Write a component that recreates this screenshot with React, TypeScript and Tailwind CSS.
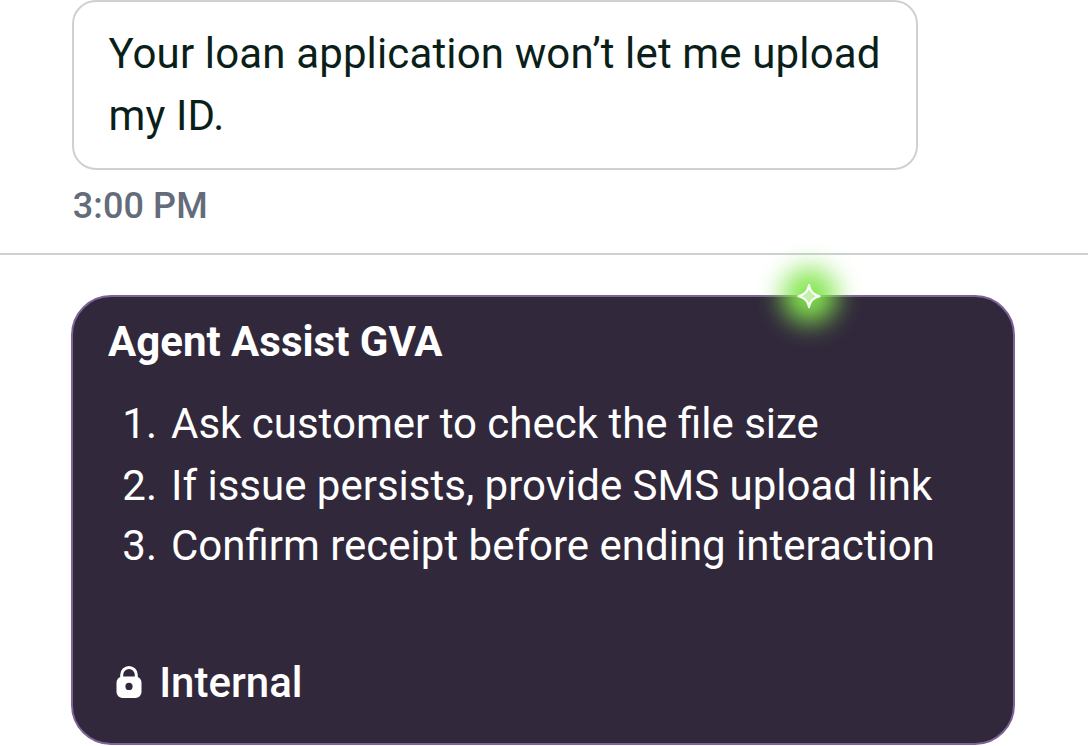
const STEPS = [
  'Ask customer to check the file size',
  'If issue persists, provide SMS upload link',
  'Confirm receipt before ending interaction',
]

export default function App() {
  return (
    <main className="flex h-[746px] w-[1088px] flex-col overflow-hidden bg-white font-['Roboto',sans-serif]">
      <CustomerMessage text="Your loan application won’t let me upload my ID." time="3:00 PM" />
      <AssistCard title="Agent Assist GVA" steps={STEPS} />
    </main>
  )
}

// CustomerMessage is the outlined bubble with its timestamp underneath.
function CustomerMessage({ text, time }: { text: string; time: string }) {
  return (
    <section className="h-[255px] shrink-0 border-b-2 border-[#cdd2d0] pl-[72px]">
      <p className="h-[170px] w-[846px] rounded-[24px] border-2 border-[#cdd2d0] pl-[34.5px] pt-[21px] text-[42px] leading-[62px] tracking-[0.14px] text-[#0b1f1a]">
        {text}
      </p>
      <time className="ml-[0.7px] mt-[15px] block text-[36px] font-medium leading-[42px] tracking-[0.12px] text-[#646c7a]">{time}</time>
    </section>
  )
}

// AssistCard lists the suggested steps; only the agent can see it.
function AssistCard({ title, steps }: { title: string; steps: string[] }) {
  return (
    <section className="relative ml-[71px] mt-[40px] flex h-[450px] w-[944px] shrink-0 flex-col rounded-[40px] border-2 border-[#7e6496] bg-[#31283b] pl-[35px] text-[42px] text-white">
      <h2 className="mt-[20px] font-bold leading-[50px]">{title}</h2>
      <ol className="mt-[26px] leading-[61px]">
        {steps.map((step, i) => (
          <li key={step} className="flex even:-mb-px even:pt-px">
            <span className="w-[49px] text-right">{i + 1}.</span>
            <span className="ml-[14px] whitespace-nowrap">{step}</span>
          </li>
        ))}
      </ol>
      <footer className="mt-[82px] flex items-center font-medium leading-[50px]">
        <LockIcon />
        <span className="ml-[17.2px]">Internal</span>
      </footer>
      <Sparkle />
    </section>
  )
}

function LockIcon() {
  return (
    <svg className="mb-[2px] ml-[8px] h-[32px] w-[26px]" viewBox="0 0 26 32" aria-hidden="true">
      <path d="M5.7 12V8.8a7.3 7.3 0 0 1 14.6 0v3.2" fill="none" stroke="#fff" strokeWidth="3" />
      <path
        fill="#fff"
        fillRule="evenodd"
        d="M6.5 10.5h13a6 6 0 0 1 6 6v9.5a6 6 0 0 1-6 6h-13a6 6 0 0 1-6-6v-9.5a6 6 0 0 1 6-6ZM13 16.8a3.6 3.6 0 1 0 0 7.2 3.6 3.6 0 0 0 0-7.2Z"
      />
    </svg>
  )
}

// Sparkle sits on the card's top edge with a green glow behind it.
function Sparkle() {
  return (
    <div className="absolute left-[686px] top-[-51px] flex size-[100px] items-center justify-center">
      <div className="absolute left-[23px] top-[22px] size-[55px] rounded-full bg-[#84e650] blur-[13px]" />
      <svg className="relative size-[26px]" viewBox="-13 -13 26 26" aria-hidden="true">
        <path
          d="M0-11C1-4.8 4.8-1 10.7 0.2C4.8 1.3 1 5 0 11.3C-1 5-4.8 1.3-10.7 0.2C-4.8-1-1-4.8 0-11Z"
          fill="#c4f0ab"
          stroke="#fff"
          strokeWidth="2"
          strokeLinejoin="round"
        />
      </svg>
    </div>
  )
}
